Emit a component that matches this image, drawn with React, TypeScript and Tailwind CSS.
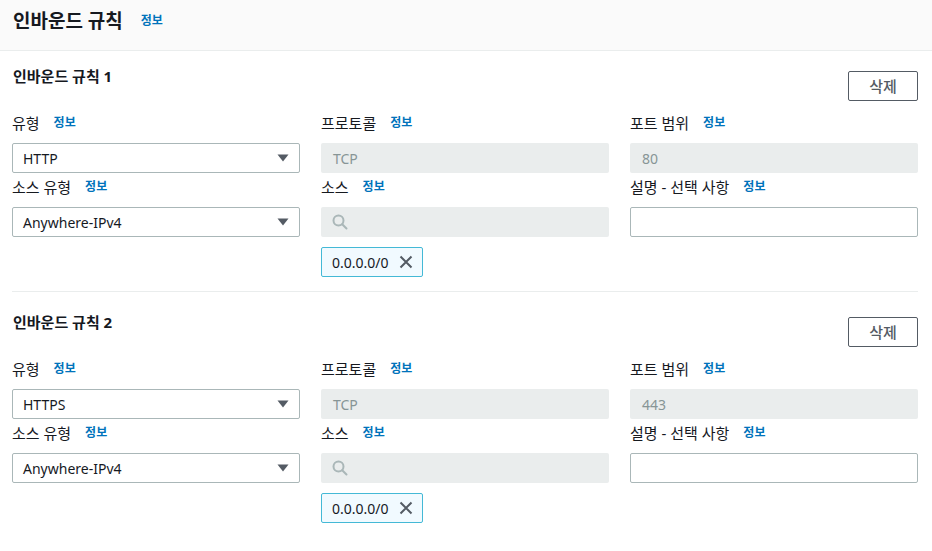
import React from "react";

const Info = () => (
  <span className="text-[12px] font-semibold leading-[20px] text-[#0073bb]">정보</span>
);

const Label = ({ text }: { text: string }) => (
  <div className="flex h-[20px] items-center gap-[14px] text-[15px] leading-[20px] text-[#16191f]">
    <span>{text}</span>
    <Info />
  </div>
);

const Select = ({ value }: { value: string }) => (
  <div className="flex h-[30px] items-center justify-between rounded-[2px] border border-[#aab7b8] bg-white pl-[10px] pr-[10px] text-[14px] text-[#16191f]">
    <span>{value}</span>
    <svg width="12" height="8" viewBox="0 0 12 8">
      <path d="M0.5 0.5 L11.5 0.5 L6 7.5 Z" fill="#545b64" />
    </svg>
  </div>
);

const Disabled = ({ value }: { value: string }) => (
  <div className="flex h-[30px] items-center rounded-[2px] bg-[#eaeded] pl-[12px] text-[14px] text-[#879596]">
    {value}
  </div>
);

const SearchBox = () => (
  <div className="flex h-[30px] items-center rounded-[2px] bg-[#eaeded] pl-[11px]">
    <svg width="16" height="16" viewBox="0 0 16 16" fill="none">
      <circle cx="6.5" cy="6.5" r="5" stroke="#aab7b8" strokeWidth="2" />
      <path d="M10.2 10.2 L14.5 14.5" stroke="#aab7b8" strokeWidth="2" strokeLinecap="round" />
    </svg>
  </div>
);

const TextInput = () => (
  <div className="h-[30px] rounded-[2px] border border-[#aab7b8] bg-white" />
);

const Token = () => (
  <div className="flex h-[30px] w-[102px] items-center gap-[10px] rounded-[2px] border border-[#44b9d6] bg-[#f1faff] pl-[10px] text-[14px] text-[#16191f]">
    <span>0.0.0.0/0</span>
    <svg width="14" height="14" viewBox="0 0 14 14" fill="none">
      <path d="M1.5 1.5 L12.5 12.5 M12.5 1.5 L1.5 12.5" stroke="#545b64" strokeWidth="2" />
    </svg>
  </div>
);

const Rule = ({
  n,
  type,
  port,
  pt,
  last,
}: {
  n: number;
  type: string;
  port: string;
  pt: string;
  last?: boolean;
}) => (
  <div className={pt}>
    <div className="flex items-start justify-between">
      <div className="pl-[1px] text-[15px] font-bold leading-[20px] text-[#16191f]">
        인바운드 규칙 {n}
      </div>
      <button className="mt-[5px] flex h-[30px] w-[70px] items-center justify-center rounded-[2px] border border-[#545b64] bg-white text-[15px] font-medium text-[#545b64]">
        삭제
      </button>
    </div>
    <div className="mt-[12px] grid grid-cols-3 gap-x-[21px]">
      <div>
        <Label text="유형" />
        <div className="mt-[10px]">
          <Select value={type} />
        </div>
        <div className="mt-[4px]">
          <Label text="소스 유형" />
        </div>
        <div className="mt-[10px]">
          <Select value="Anywhere-IPv4" />
        </div>
      </div>
      <div>
        <Label text="프로토콜" />
        <div className="mt-[10px]">
          <Disabled value="TCP" />
        </div>
        <div className="mt-[4px]">
          <Label text="소스" />
        </div>
        <div className="mt-[10px]">
          <SearchBox />
        </div>
        <div className="mt-[10px]">
          <Token />
        </div>
      </div>
      <div>
        <Label text="포트 범위" />
        <div className="mt-[10px]">
          <Disabled value={port} />
        </div>
        <div className="mt-[4px]">
          <Label text="설명 - 선택 사항" />
        </div>
        <div className="mt-[10px]">
          <TextInput />
        </div>
      </div>
    </div>
    {!last && <div className="mt-[14px] h-px bg-[#eaeded]" />}
  </div>
);

export default function App() {
  return (
    <div className="h-[551px] w-[932px] overflow-hidden bg-white font-['Noto_Sans','Noto_Sans_CJK_KR',sans-serif]">
      <div className="flex h-[51px] items-center gap-[18px] border-b border-[#eaeded] bg-[#fafafa] pb-[8px] pl-[13px]">
        <span className="text-[19px] font-bold leading-[26px] text-[#16191f]">인바운드 규칙</span>
        <Info />
      </div>
      <div className="pl-[12px] pr-[14px]">
        <Rule n={1} type="HTTP" port="80" pt="pt-[15px]" />
        <Rule n={2} type="HTTPS" port="443" pt="pt-[20px]" last />
      </div>
    </div>
  );
}
